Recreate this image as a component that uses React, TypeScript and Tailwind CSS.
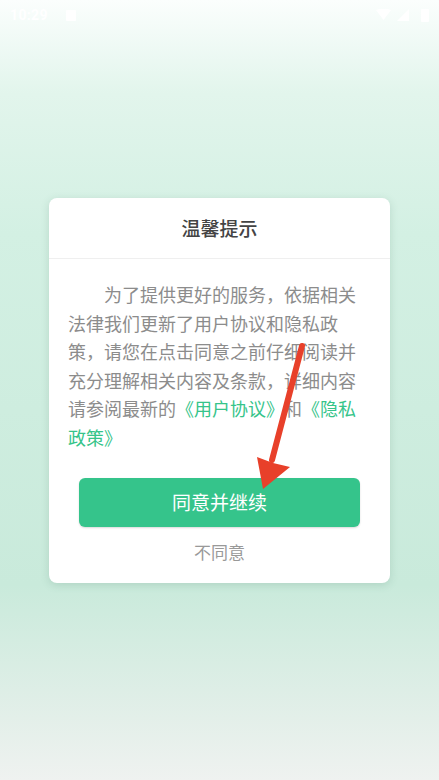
import React from 'react'

const font = { fontFamily: '"Noto Sans CJK SC", "Noto Sans", sans-serif' }

function StatusBar() {
  return (
    <div className="flex h-[30px] items-center justify-between px-[10px] text-white">
      <div className="flex items-center gap-[18px]">
        <span className="text-[14px] font-bold tracking-wide" style={{ fontFamily: 'Roboto, sans-serif' }}>10:29</span>
        <span className="h-[11px] w-[10px] rounded-[1px] bg-white" />
      </div>
      <div className="flex items-center gap-[6px]">
        <svg width="15" height="12" viewBox="0 0 15 12"><path d="M0 1 Q7.5 -2 15 1 L7.5 11 Z" fill="white" /></svg>
        <svg width="12" height="12" viewBox="0 0 12 12"><path d="M12 0 L12 12 L0 12 Z" fill="white" /></svg>
        <span className="ml-[6px] h-[13px] w-[8px] rounded-[1px] bg-white" />
      </div>
    </div>
  )
}

function Arrow() {
  return (
    <svg className="pointer-events-none absolute left-0 top-0" width="439" height="780" viewBox="0 0 439 780">
      <line x1="302" y1="346" x2="272" y2="460" stroke="#e8402a" strokeWidth="6" strokeLinecap="round" />
      <path d="M257 457 L263 489 L290 467 L273 463 Z" fill="#e8402a" />
    </svg>
  )
}

export default function App() {
  return (
    <div
      className="relative flex h-[780px] w-[439px] flex-col overflow-hidden bg-[linear-gradient(180deg,#fbfefd_0%,#e2f5ec_12%,#d3f0e3_30%,#c9eadb_75%,#e3efe9_92%,#eff2f0_100%)]"
      style={font}
    >
      <StatusBar />
      <div className="flex flex-1 items-start justify-center pt-[168px]">
        <div className="w-[341px] rounded-[8px] bg-white shadow-[0_2px_8px_rgba(60,110,90,0.18)]">
          <div className="flex h-[61px] items-center justify-center border-b border-[#efefef] text-[19px] font-medium text-[#444]">
            温馨提示
          </div>
          <p className="pl-[19px] pr-[28px] pt-[21px] indent-[2em] text-[18px] leading-[28.6px] text-[#8c8c8c]">
            为了提供更好的服务，依据相关法律我们更新了用户协议和隐私政策，请您在点击同意之前仔细阅读并充分理解相关内容及条款，详细内容请参阅最新的<span className="text-[#36c48a]">《用户协议》</span>和<span className="text-[#36c48a]">《隐私政策》</span>
          </p>
          <div className="flex flex-col items-center px-[30px] pt-[26px] pb-[16px]">
            <button className="h-[49px] w-full rounded-[6px] bg-[#35c48b] text-[19px] text-white shadow-[0_1px_2px_rgba(0,0,0,0.15)]">
              同意并继续
            </button>
            <button className="mt-[10px] h-[30px] text-[17px] text-[#999]">不同意</button>
          </div>
        </div>
      </div>
      <Arrow />
    </div>
  )
}
